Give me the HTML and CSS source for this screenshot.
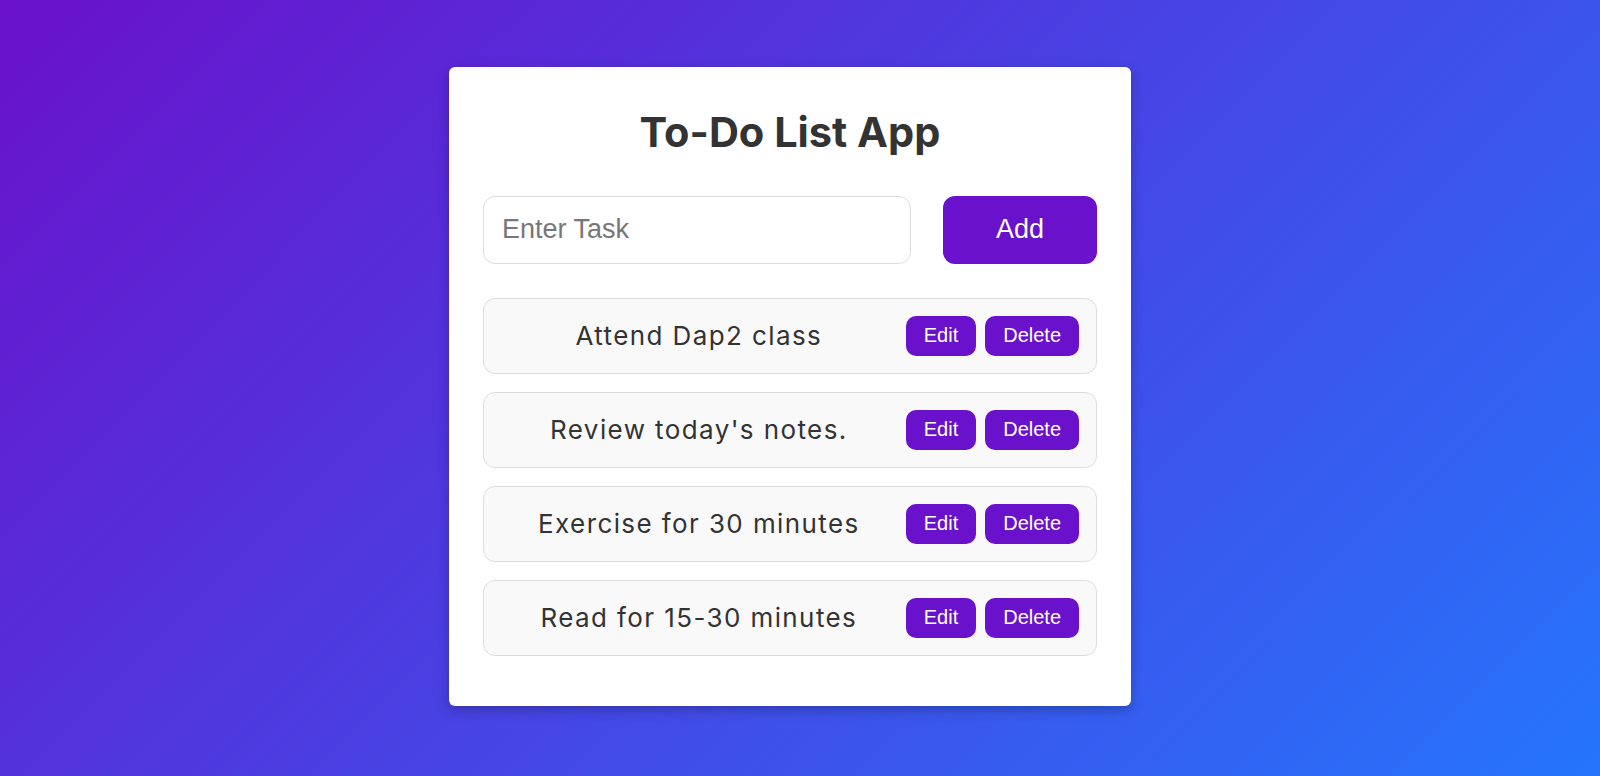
FILE: index.html
```html
<!DOCTYPE html>
<html lang="en">
<head>
<meta charset="utf-8">
<title>To-Do List App</title>
<link rel="stylesheet" href="styles.css">
</head>
<body>
  <main class="card">
    <h1 class="title">To-Do List App</h1>
    <div class="add-row">
      <input class="task-input" type="text" placeholder="Enter Task">
      <button class="add-btn">Add</button>
    </div>
    <ul class="task-list">
      <li class="task">
        <span class="task-text">Attend Dap2 class</span>
        <button class="small-btn">Edit</button>
        <button class="small-btn">Delete</button>
      </li>
      <li class="task">
        <span class="task-text">Review today's notes.</span>
        <button class="small-btn">Edit</button>
        <button class="small-btn">Delete</button>
      </li>
      <li class="task">
        <span class="task-text">Exercise for 30 minutes</span>
        <button class="small-btn">Edit</button>
        <button class="small-btn">Delete</button>
      </li>
      <li class="task">
        <span class="task-text">Read for 15-30 minutes</span>
        <button class="small-btn">Edit</button>
        <button class="small-btn">Delete</button>
      </li>
    </ul>
  </main>
</body>
</html>
```

FILE: styles.css
```css
* {
  box-sizing: border-box;
}

html, body {
  height: 100%;
}

body {
  margin: 0;
  min-height: 100vh;
  display: flex;
  justify-content: center;
  align-items: center;
  padding: 0 20px 4px 0;
  background: linear-gradient(135deg, #6a11cb 0%, #2575fc 100%);
  font-family: "Inter", "Liberation Sans", sans-serif;
}

.card {
  width: 682px;
  background: #ffffff;
  border-radius: 6px;
  padding: 34px 34px 50px;
  box-shadow: 0 4px 12px rgba(0, 0, 0, 0.25);
}

.title {
  margin: 7px 0 40px;
  line-height: 48px;
  font-size: 41.5px;
  font-weight: 700;
  color: #333333;
  text-align: center;
}

.add-row {
  display: flex;
  gap: 32px;
  margin-bottom: 34px;
}

.task-input {
  flex: 1;
  height: 68px;
  border: 1px solid #dddddd;
  border-radius: 12px;
  padding: 0 18px;
  font-family: "Liberation Sans", Arial, sans-serif;
  font-size: 27px;
  color: #333333;
  outline: none;
}

.task-input::placeholder {
  color: #777777;
}

.add-btn {
  width: 154px;
  height: 68px;
  border: none;
  border-radius: 12px;
  background: #6a11cb;
  color: #ffffff;
  font-family: "Liberation Sans", Arial, sans-serif;
  font-size: 27px;
}

.task-list {
  list-style: none;
  margin: 0;
  padding: 0;
  display: flex;
  flex-direction: column;
  gap: 18px;
}

.task {
  display: flex;
  align-items: center;
  height: 76px;
  padding: 0 17px;
  background: #f9f9f9;
  border: 1px solid #dddddd;
  border-radius: 12px;
}

.task-text {
  flex: 1;
  text-align: center;
  font-size: 26px;
  letter-spacing: 1.4px;
  font-weight: 400;
  color: #333333;
}

.small-btn {
  height: 40px;
  margin-left: 9px;
  padding: 0 18px;
  border: none;
  border-radius: 10px;
  background: #6a11cb;
  color: #ffffff;
  font-family: "Liberation Sans", Arial, sans-serif;
  font-size: 20px;
}
```
